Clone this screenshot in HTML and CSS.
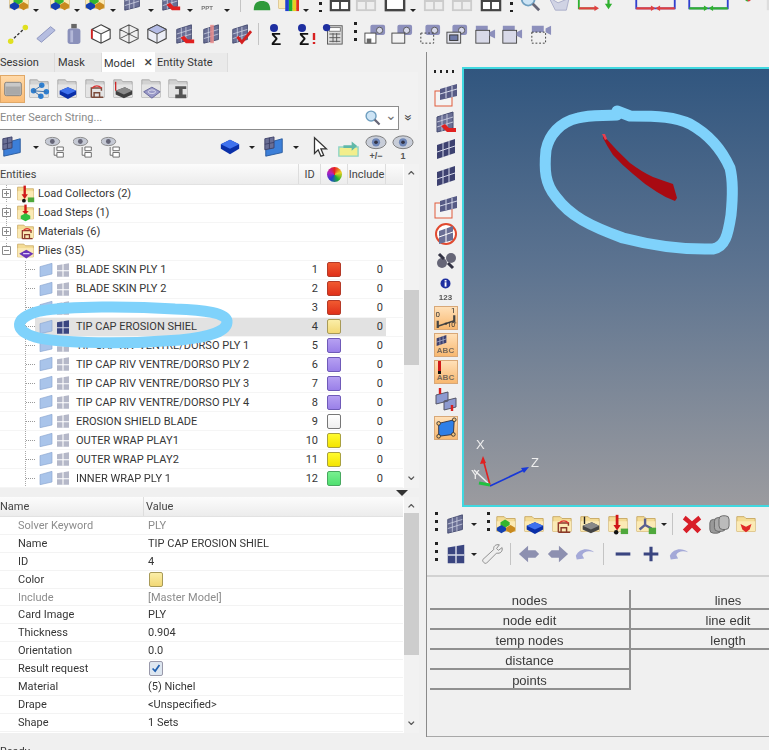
FILE: index.html
```html
<!DOCTYPE html>
<html lang="en">
<head>
<meta charset="utf-8">
<title>HyperMesh Model Browser</title>
<link rel="stylesheet" href="styles.css">
</head>
<body>
<svg class="sprite" aria-hidden="true">
  <symbol id="fy" viewBox="0 0 24 24"><path d="M2 4h8l2 2h10v14H2z" fill="#f4dc95" stroke="#c8a862"/><path d="M2 9h20v11H2z" fill="#fbeab5"/></symbol>
  <symbol id="fg" viewBox="0 0 24 24"><path d="M2 2h8l2 2h10v17H2z" fill="#d2d2d2" stroke="#a5a5a5"/><path d="M2 7h20v14H2z" fill="#e4e4e4"/></symbol>
  <symbol id="rb" viewBox="0 0 24 24"><path d="M12 4l10 5v5l-10 6-10-6V9z" fill="#0a2fa8"/><path d="M12 4l10 5-10 5L2 9z" fill="#3f72ee"/></symbol>
  <symbol id="multi" viewBox="0 0 24 24"><use href="#fy"/><path d="M11 7l5 3v3l-5 3-5-3v-3z" fill="#35b52f"/><path d="M7 13l5 3v3l-5 3-5-3v-3z" fill="#1440b0"/><path d="M17 13l5 3v3l-5 3-5-3v-3z" fill="#c98a1e"/></symbol>
  <symbol id="fblue" viewBox="0 0 24 24"><use href="#fy"/><path d="M13 10l9 4v4l-9 5-9-5v-4z" fill="#0a2fa8"/><path d="M13 10l9 4-9 4-9-4z" fill="#3f72ee"/></symbol>
  <symbol id="ftp" viewBox="0 0 24 24"><use href="#fy"/><path d="M8 21V11h11v3M11 21v-5h6v5M8 21h13" fill="none" stroke="#8b3a2a" stroke-width="1.6"/><path d="M9 11c3-3 7-3 10 0" fill="none" stroke="#d33" stroke-width="1.5"/></symbol>
  <symbol id="fslab" viewBox="0 0 24 24"><use href="#fy"/><path d="M14 10l8 4v4l-9 4-9-4v-4z" fill="#444"/><path d="M14 10l8 4-9 4-9-4z" fill="#888"/><path d="M6 4v8" stroke="#222" stroke-width="1.5"/></symbol>
  <symbol id="fload" viewBox="0 0 24 24"><use href="#fy"/><path d="M11 2v13" stroke="#d01818" stroke-width="3"/><path d="M7 13h8l-4 6z" fill="#d01818"/><circle cx="10" cy="21" r="2.4" fill="#111"/><path d="M15 17h8v6h-8z" fill="#4fa83c"/></symbol>
  <symbol id="fstep" viewBox="0 0 24 24"><use href="#fy"/><path d="M12 2v10" stroke="#d01818" stroke-width="3"/><path d="M8 10h8l-4 5z" fill="#d01818"/><path d="M12 13l6 3v4l-6 3-6-3v-4z" fill="#2fc040"/></symbol>
  <symbol id="faxis" viewBox="0 0 24 24"><use href="#fy"/><path d="M11 13V6M11 13l-6 5M11 13l7 4" fill="none" stroke="#5a5f90" stroke-width="2.6"/><path d="M15 16h8v7h-8z" fill="#4fa83c"/></symbol>
  <symbol id="fply" viewBox="0 0 24 24"><use href="#fy"/><path d="M13 11l9 5-9 6-9-6z" fill="#6a35b8"/><path d="M9 16h8" stroke="#e8d8ff" stroke-width="1.5"/></symbol>
  <symbol id="gfold" viewBox="0 0 24 24"><rect x="2" y="4" width="20" height="16" rx="2" fill="#c8c8c8" stroke="#777"/><rect x="3" y="9" width="18" height="10" fill="#a9a9a9"/></symbol>
  <symbol id="gnet" viewBox="0 0 24 24"><use href="#fg"/><circle cx="6" cy="14" r="3" fill="#2f7fd0"/><circle cx="15" cy="8" r="3" fill="#2f7fd0"/><circle cx="20" cy="15" r="3" fill="#2f7fd0"/><circle cx="14" cy="20" r="3" fill="#2f7fd0"/><path d="M6 14L15 8M6 14l14 1M6 14l8 6" stroke="#3a6ea8"/></symbol>
  <symbol id="gblue" viewBox="0 0 24 24"><use href="#fg"/><path d="M13 10l9 4v4l-9 5-9-5v-4z" fill="#0a2fa8"/><path d="M13 10l9 4-9 4-9-4z" fill="#3f72ee"/></symbol>
  <symbol id="gtp" viewBox="0 0 24 24"><use href="#fg"/><path d="M8 21V11h11v3M11 21v-5h6v5M8 21h13" fill="none" stroke="#7a4a3a" stroke-width="1.6"/><path d="M9 11c3-3 7-3 10 0" fill="none" stroke="#d33" stroke-width="1.5"/></symbol>
  <symbol id="gslab" viewBox="0 0 24 24"><use href="#fg"/><path d="M14 10l8 4v4l-9 4-9-4v-4z" fill="#3e3e3e"/><path d="M14 10l8 4-9 4-9-4z" fill="#8a8a8a"/><path d="M4 4v10" stroke="#c22" stroke-width="1.4"/></symbol>
  <symbol id="gply" viewBox="0 0 24 24"><use href="#fg"/><path d="M13 10l9 5-9 7-9-7z" fill="#9a9ac8" stroke="#66669a"/><ellipse cx="13" cy="15" rx="4" ry="2" fill="none" stroke="#dde"/></symbol>
  <symbol id="gbeam" viewBox="0 0 24 24"><use href="#fg"/><path d="M9 9h12v3h-4v6h4v4H9v-4h4v-6H9z" fill="#555"/></symbol>
  <symbol id="ply" viewBox="0 0 24 24"><path d="M3 8l18-5v15L3 22z" fill="#3c7fd8" stroke="#2a5a9c"/><path d="M2 3l10-2v12L2 15zM2 9l10-2M7 2v12" fill="#6a6f95" stroke="#3d4168"/></symbol>
  <symbol id="plyp" viewBox="0 0 24 24"><path d="M3 7l18-5v16L3 22z" fill="#a9c4ea" stroke="#8ba6d0"/></symbol>
  <symbol id="gridg" viewBox="0 0 24 24"><path d="M3 5l18-3v20H3z" fill="#b5b8c8"/><path d="M3 13h18M12 3v19" stroke="#fff" stroke-width="1.6"/></symbol>
  <symbol id="gridd" viewBox="0 0 24 24"><path d="M3 5l18-3v20H3z" fill="#3a4580"/><path d="M3 13h18M12 3v19" stroke="#d8dbe8" stroke-width="1.6"/></symbol>
  <symbol id="eyet" viewBox="0 0 24 24"><ellipse cx="8" cy="6" rx="8" ry="4.5" fill="#c5c9d4" stroke="#888"/><circle cx="8" cy="6" r="2.6" fill="#667"/><path d="M13 12h7v4h-7zM13 18h7v5h-7zM10 12v9h3" fill="#fff" stroke="#666"/></symbol>
  <symbol id="eyeb" viewBox="0 0 24 24"><ellipse cx="12" cy="9" rx="11" ry="7" fill="#c8cdd8" stroke="#777"/><circle cx="12" cy="9" r="4.5" fill="#6f87b8"/><circle cx="12" cy="9" r="2" fill="#334"/></symbol>
  <symbol id="cursor" viewBox="0 0 24 24"><path d="M6 2v17l4-4 3 7 3-1-3-7h6z" fill="#fff" stroke="#333" stroke-width="1.4"/></symbol>
  <symbol id="arrbox" viewBox="0 0 24 24"><path d="M2 12h21v10H2z" fill="#f2ee8c" stroke="#8fd4c8" stroke-width="1.5"/><path d="M7 10h9V6l6 5-6 5v-3H7z" fill="#60b8a8"/></symbol>
  <symbol id="lens" viewBox="0 0 24 24"><circle cx="10" cy="10" r="7" fill="#cde4f5" stroke="#6f9fc0" stroke-width="2"/><path d="M15 15l7 7" stroke="#667" stroke-width="3"/></symbol>
  <symbol id="ydots" viewBox="0 0 24 24"><path d="M4 20L20 5" stroke="#333" stroke-width="1.5" stroke-dasharray="3 2"/><circle cx="4" cy="20" r="3" fill="#e0e020"/><circle cx="20" cy="5" r="3" fill="#e0e020"/></symbol>
  <symbol id="pill" viewBox="0 0 24 24"><path d="M2 17L17 4l5 4L7 21z" fill="#b5bde0" stroke="#8a92bc"/></symbol>
  <symbol id="mass" viewBox="0 0 24 24"><rect x="9" y="1" width="6" height="5" fill="#666"/><rect x="5" y="6" width="14" height="17" rx="3" fill="#8a90ba"/><rect x="8" y="8" width="3" height="13" fill="#b3b8d8"/></symbol>
  <symbol id="cube" viewBox="0 0 24 24"><path d="M12 2l10 5v10l-10 5-10-5V7zM2 7l10 5 10-5M12 12v10" fill="#fff" stroke="#444" stroke-width="1.2"/></symbol>
  <symbol id="cuber" viewBox="0 0 24 24"><use href="#cube"/><path d="M2 7v10" stroke="#d42020" stroke-width="2"/></symbol>
  <symbol id="cubew" viewBox="0 0 24 24"><path d="M12 2l10 5v10l-10 5-10-5V7zM2 7l20 10M22 7L2 17M12 2v20" fill="none" stroke="#555" stroke-width="1.1"/></symbol>
  <symbol id="cubeb" viewBox="0 0 24 24"><path d="M12 2l10 5v10l-10 5-10-5V7z" fill="#eceef6" stroke="#444" stroke-width="1.2"/><path d="M12 2l10 5-10 5L2 7z" fill="#b4bce6" stroke="#444"/><path d="M12 12v10" stroke="#444"/></symbol>
  <symbol id="mesh" viewBox="0 0 24 24"><path d="M3 7l16-5v16L3 22z" fill="#6a6f95" stroke="#444a70"/><path d="M3 12l16-5M3 17l16-5M8 5v16M13 4v16" stroke="#d5d8e8" stroke-width=".8"/></symbol>
  <symbol id="meshr" viewBox="0 0 24 24"><use href="#mesh"/><path d="M11 14l4 4h7v4H13l-6-6z" fill="#e02020"/></symbol>
  <symbol id="meshc" viewBox="0 0 24 24"><use href="#mesh"/><path d="M10 2h4v20h-4z" fill="#e88a88" opacity=".85"/></symbol>
  <symbol id="meshk" viewBox="0 0 24 24"><use href="#mesh"/><path d="M8 15l5 6L23 9" fill="none" stroke="#d42020" stroke-width="3"/></symbol>
  <symbol id="info" viewBox="0 0 24 24"><circle cx="12" cy="12" r="8" fill="#1e2fa0"/><rect x="10.6" y="10" width="3" height="7" fill="#fff"/><rect x="10.6" y="6.5" width="3" height="2.4" fill="#fff"/></symbol>
  <symbol id="calc" viewBox="0 0 24 24"><rect x="6" y="3" width="16" height="20" fill="#ddd" stroke="#555"/><rect x="8" y="5" width="12" height="4" fill="#fff" stroke="#777"/><path d="M8 12h12M8 16h12M8 20h12M12 11v10M16 11v10" stroke="#555"/><circle cx="5" cy="5" r="4" fill="#1e2fa0"/></symbol>
  <symbol id="camf" viewBox="0 0 24 24"><rect x="7" y="2" width="16" height="11" rx="2" fill="#8d90bc"/><circle cx="17" cy="8" r="3.4" fill="#d7d9ea" stroke="#555"/><rect x="1" y="11" width="12" height="11" fill="#fff" stroke="#444"/><rect x="3" y="17" width="5" height="5" fill="#666"/></symbol>
  <symbol id="camw" viewBox="0 0 24 24"><rect x="7" y="2" width="16" height="11" rx="2" fill="#8d90bc"/><circle cx="17" cy="8" r="3.4" fill="#d7d9ea" stroke="#555"/><rect x="1" y="11" width="14" height="11" fill="#f2f2f2" stroke="#444"/></symbol>
  <symbol id="camd" viewBox="0 0 24 24"><rect x="7" y="2" width="16" height="11" rx="2" fill="#8d90bc"/><circle cx="17" cy="8" r="3.4" fill="#d7d9ea" stroke="#555"/><rect x="2" y="11" width="14" height="11" fill="none" stroke="#333" stroke-dasharray="2 2"/></symbol>
  <symbol id="camm" viewBox="0 0 24 24"><rect x="7" y="2" width="16" height="11" rx="2" fill="#8d90bc"/><circle cx="17" cy="8" r="3.4" fill="#d7d9ea" stroke="#555"/><rect x="1" y="10" width="15" height="12" fill="#dfe0ea" stroke="#444"/><rect x="4" y="13" width="9" height="6" fill="#6f7aa8" stroke="#333"/></symbol>
  <symbol id="vid" viewBox="0 0 24 24"><path d="M2 3h13v5H2z" fill="#8d90bc"/><rect x="2" y="8" width="15" height="14" fill="#d8d9e8" stroke="#444"/><path d="M17 10l6-3v10l-6-3z" fill="#8d90bc"/></symbol>
  <symbol id="vidd" viewBox="0 0 24 24"><path d="M2 3h13v7H2z" fill="#8d90bc"/><rect x="2" y="10" width="15" height="12" fill="none" stroke="#333" stroke-dasharray="2 2"/><path d="M17 6l6-3v10l-6-3z" fill="#8d90bc"/></symbol>
  <symbol id="person" viewBox="0 0 24 24"><circle cx="12" cy="6" r="5" fill="#e8b080"/><path d="M3 22c0-8 4-10 9-10s9 2 9 10z" fill="#2f9a3a"/></symbol>
  <symbol id="bars" viewBox="0 0 24 24"><use href="#fy"/><path d="M9 8h4v15H9z" fill="#2040d0"/><path d="M13 5h4v18h-4z" fill="#20b030"/><path d="M17 3h4v20h-4z" fill="#e8d020"/><path d="M21 7h3v16h-3z" fill="#e03020"/></symbol>
  <symbol id="win1" viewBox="0 0 24 24"><rect x="2" y="2" width="20" height="20" fill="#fff" stroke="#444" stroke-width="2.4"/><path d="M2 12h20M12 12v10" stroke="#444" stroke-width="2"/></symbol>
  <symbol id="win2" viewBox="0 0 24 24"><rect x="2" y="2" width="20" height="20" fill="#eee" stroke="#ccc" stroke-width="2"/><path d="M2 12h20M12 2v20" stroke="#ccc" stroke-width="2"/></symbol>
  <symbol id="win3" viewBox="0 0 24 24"><rect x="2" y="2" width="20" height="20" fill="#fff" stroke="#444" stroke-width="2.6"/></symbol>
  <symbol id="diamond" viewBox="0 0 24 24"><path d="M1 8l10 6 12-5-3 13H8z" fill="#d0d3e4" stroke="#a8acc8"/></symbol>
  <symbol id="axrg" viewBox="0 0 24 24"><path d="M2 0v20h20" fill="none" stroke="#30b030" stroke-width="2"/><path d="M2 20h18" stroke="#e04040" stroke-width="2.4"/><path d="M19 17l5 3-5 3z" fill="#e04040"/></symbol>
  <symbol id="axy" viewBox="0 0 24 24"><path d="M6 0v18" stroke="#30b030" stroke-width="2.4"/><path d="M2 15l4 6 4-6z" fill="#30b030"/></symbol>
  <symbol id="axbr" viewBox="0 0 48 24"><path d="M3 0v20h42V0" fill="none" stroke="#3040d0" stroke-width="2"/><path d="M3 20h18M45 20H27" stroke="#e04040" stroke-width="2.4"/><path d="M19 17l5 3-5 3zM29 17l-5 3 5 3z" fill="#e04040"/></symbol>
  <symbol id="axbg" viewBox="0 0 48 24"><path d="M3 0v20h42V0" fill="none" stroke="#3040d0" stroke-width="2"/><path d="M3 20h18M45 20H27" stroke="#30b030" stroke-width="2.4"/><path d="M19 17l5 3-5 3zM29 17l-5 3 5 3z" fill="#30b030"/></symbol>
  <symbol id="tri" viewBox="0 0 24 24"><path d="M12 12L12 0" stroke="#3040d0" stroke-width="2.4"/><path d="M12 12L2 4" stroke="#30b030" stroke-width="2.4"/><path d="M12 12l10-8" stroke="#e04040" stroke-width="2.4"/></symbol>
  <symbol id="orgx" viewBox="0 0 24 24"><rect x="2" y="2" width="20" height="20" fill="#ddd"/></symbol>
  <symbol id="x" viewBox="0 0 24 24"><path d="M5 3l7 6 7-6 3 4-6 5 6 6-4 4-6-6-6 6-4-4 6-6-6-5z" fill="#d81e28"/></symbol>
  <symbol id="sheets" viewBox="0 0 24 24"><rect x="2" y="7" width="12" height="15" rx="4" fill="#999" stroke="#666"/><rect x="7" y="5" width="12" height="15" rx="4" fill="#aaa" stroke="#666"/><rect x="12" y="3" width="11" height="15" rx="4" fill="#bbb" stroke="#666"/></symbol>
  <symbol id="fred" viewBox="0 0 24 24"><use href="#fy"/><path d="M6 12l6 3 6-3-2 6-4 3-4-3z" fill="#e02828"/></symbol>
  <symbol id="wrench" viewBox="0 0 24 24"><path d="M2 18L14 7c-1-3 2-6 6-5l-3 4 2 2 4-3c1 4-2 7-6 6L6 22c-2 1-5-2-4-4z" fill="#eee" stroke="#888"/></symbol>
  <symbol id="left" viewBox="0 0 24 24"><path d="M1 12L11 3v5h8l4 4-4 4h-8v5z" fill="#8d90b0"/></symbol>
  <symbol id="right" viewBox="0 0 24 24"><path d="M23 12L13 3v5H5l-4 4 4 4h8v5z" fill="#8d90b0"/></symbol>
  <symbol id="undo" viewBox="0 0 24 24"><path d="M2 14c4-8 13-9 20-4-6-2-11-1-13 3l2 4-8 1z" fill="#a4a9d8"/></symbol>
  <symbol id="plus" viewBox="0 0 24 24"><path d="M4 12h16M12 4v16" stroke="#3a4580" stroke-width="3.4"/></symbol>
  <symbol id="minus" viewBox="0 0 24 24"><path d="M4 12h16" stroke="#3a4580" stroke-width="3.4"/></symbol>
  <symbol id="vmesh" viewBox="0 0 24 24"><rect x="1" y="8" width="17" height="15" fill="#f4f4f4" stroke="#e05a3a"/><path d="M6 6l17-5v12L6 17z" fill="#565a85"/><path d="M6 11l17-5M12 4v11M18 3v11" stroke="#d5d8e8"/></symbol>
  <symbol id="vmeshb" viewBox="0 0 24 24"><path d="M3 8l18-6v14L3 22z" fill="#3d4170"/><path d="M3 15l18-6M9 6v14M15 4v14" stroke="#d5d8e8"/></symbol>
  <symbol id="vcirc" viewBox="0 0 24 24"><circle cx="12" cy="12" r="10" fill="#fff" stroke="#e04a30" stroke-width="2"/><path d="M5 9l14-5v14L5 22z" fill="#6a6f95"/><path d="M5 15l14-5M12 6v14" stroke="#fff"/></symbol>
  <symbol id="binoc" viewBox="0 0 24 24"><circle cx="8" cy="14" r="5" fill="#667"/><circle cx="17" cy="9" r="5" fill="#667"/><path d="M5 5l5 5M14 14l5 5" stroke="#334" stroke-width="3"/></symbol>
  <symbol id="scale" viewBox="0 0 24 24"><path d="M3 21l18-6" stroke="#444" stroke-width="1.6"/><path d="M3 15v8M21 9v8" stroke="#444" stroke-width="2.4"/></symbol>
  <symbol id="quad" viewBox="0 0 24 24"><path d="M4 7l17-4-1 16-16 2z" fill="#2f7fe8" stroke="#334"/><circle cx="4" cy="7" r="2" fill="#f6c47e" stroke="#333"/><circle cx="21" cy="3" r="2" fill="#f6c47e" stroke="#333"/><circle cx="20" cy="19" r="2" fill="#f6c47e" stroke="#333"/><circle cx="4" cy="21" r="2" fill="#f6c47e" stroke="#333"/></symbol>
  <symbol id="swap" viewBox="0 0 24 24"><path d="M2 8l12-3v9L2 17zM10 14l12-3v9l-12 3z" fill="#8d9ad0" stroke="#556"/><path d="M6 1v6M18 18v6" stroke="#d82020" stroke-width="2.4"/></symbol>
</svg>

<div class="frame">
<header class="toolbars">
  <div class="tb tb-clip">
    <svg class="i m8"><use href="#multi"/></svg><i class="c m3"></i>
    <svg class="i m10"><use href="#multi"/></svg><i class="c m3"></i>
    <svg class="i m4"><use href="#multi"/></svg><i class="c m4"></i>
    <svg class="i m6"><use href="#mesh"/></svg><i class="c m4"></i>
    <svg class="i m6"><use href="#meshr"/></svg><i class="c m5"></i>
    <svg class="i m4" viewBox="0 0 22 22"><text x="10" y="20" class="ppt">PPT</text></svg><i class="c m5"></i>
    <i class="sep sep-t m10"></i>
    <svg class="i m10"><use href="#person"/></svg>
    <svg class="i m4"><use href="#bars"/></svg><i class="c m4"></i>
    <i class="vd vd-short m10"></i>
    <svg class="i m7"><use href="#win1"/></svg>
    <svg class="i m4"><use href="#win2"/></svg>
    <svg class="i m7"><use href="#win3"/></svg><i class="c m4"></i>
    <svg class="i m7"><use href="#win2"/></svg>
    <svg class="i m6"><use href="#win2"/></svg>
    <svg class="i m7"><use href="#win1"/></svg>
    <i class="vd vd-short m8"></i>
    <svg class="i m6"><use href="#lens"/></svg>
    <svg class="i m7"><use href="#diamond"/></svg>
    <svg class="i m7"><use href="#axrg"/></svg>
    <svg class="i m4"><use href="#axy"/></svg>
    <svg class="i-w m8"><use href="#axbr"/></svg>
    <svg class="i-w m8"><use href="#axbg"/></svg>
    <svg class="i m6"><use href="#tri"/></svg>
    <svg class="i m6"><use href="#orgx"/></svg>
  </div>
  <div class="tb tb-second">
    <svg class="i m7"><use href="#ydots"/></svg>
    <svg class="i m6"><use href="#pill"/></svg>
    <svg class="i m6"><use href="#mass"/></svg>
    <svg class="i m5"><use href="#cuber"/></svg>
    <svg class="i m6"><use href="#cubew"/></svg>
    <svg class="i m6"><use href="#cubeb"/></svg>
    <svg class="i m6"><use href="#meshr"/></svg>
    <svg class="i m5"><use href="#meshc"/></svg>
    <svg class="i m7"><use href="#meshk"/></svg>
    <i class="sep m6"></i>
    <svg class="i m6" viewBox="0 0 22 22"><circle cx="9" cy="5" r="4" class="dot-info"/><text x="11" y="22" class="sig">Σ</text></svg>
    <svg class="i m8" viewBox="0 0 22 22"><circle cx="7" cy="5" r="4" class="dot-info"/><text x="9" y="22" class="sig">Σ</text><path d="M19 10v7M19 19v2" class="bang"/></svg>
    <svg class="i m5"><use href="#calc"/></svg>
    <i class="vd m10"></i>
    <svg class="i m7"><use href="#camf"/></svg>
    <svg class="i m5"><use href="#camw"/></svg>
    <svg class="i m6"><use href="#camd"/></svg>
    <svg class="i m5"><use href="#camm"/></svg>
    <svg class="i m6"><use href="#vid"/></svg>
    <svg class="i m5"><use href="#vid"/></svg>
    <svg class="i m7"><use href="#vidd"/></svg>
  </div>
</header>

<div class="main">
  <section class="panel">
    <nav class="tabs">
      <span class="tab tab-session">Session</span>
      <span class="tab tab-mask">Mask</span>
      <span class="tab tab-model">Model <b class="close">×</b></span>
      <span class="tab tab-entity">Entity State</span>
    </nav>
    <div class="browser-icons">
      <span class="hot"><svg class="i"><use href="#gfold"/></svg></span>
      <svg class="i m3"><use href="#gnet"/></svg>
      <svg class="i m6"><use href="#gblue"/></svg>
      <svg class="i m6"><use href="#gtp"/></svg>
      <svg class="i m6"><use href="#gslab"/></svg>
      <svg class="i m6"><use href="#gply"/></svg>
      <svg class="i m5"><use href="#gbeam"/></svg>
    </div>
    <div class="search-row">
      <div class="search">
        <span class="placeholder">Enter Search String...</span>
        <svg class="lens"><use href="#lens"/></svg>
        <span class="vee">⌄</span>
      </div>
      <span class="more">»</span>
    </div>
    <div class="filter-row">
      <svg class="i"><use href="#ply"/></svg><i class="c m10"></i>
      <svg class="i m6"><use href="#eyet"/></svg>
      <svg class="i m6"><use href="#eyet"/></svg>
      <svg class="i m6"><use href="#eyet"/></svg>
      <svg class="i m-auto"><use href="#rb"/></svg><i class="c m8"></i>
      <svg class="i m8"><use href="#ply"/></svg><i class="c m8"></i>
      <svg class="i m10"><use href="#cursor"/></svg>
      <svg class="i m6"><use href="#arrbox"/></svg>
      <span class="eye-wrap m6"><svg class="i"><use href="#eyeb"/></svg><em>+/−</em></span>
      <span class="eye-wrap m5"><svg class="i"><use href="#eyeb"/></svg><em>1</em></span>
    </div>

    <div class="grid-wrap entities">
      <div class="grid-main">
        <div class="thead ent-grid">
          <span class="th">Entities</span>
          <span class="th th-id">ID</span>
          <span class="th th-color"><i class="wheel"></i></span>
          <span class="th th-inc">Include</span>
        </div>
        <div class="tree">
          <div class="row root"><svg class="exp"><path d="M.5.5h8v8h-8zM2 4.5h5M4.5 2v5"/></svg><svg class="ti"><use href="#fload"/></svg><span>Load Collectors (2)</span></div>
          <div class="row root"><svg class="exp"><path d="M.5.5h8v8h-8zM2 4.5h5M4.5 2v5"/></svg><svg class="ti"><use href="#fstep"/></svg><span>Load Steps (1)</span></div>
          <div class="row root"><svg class="exp"><path d="M.5.5h8v8h-8zM2 4.5h5M4.5 2v5"/></svg><svg class="ti"><use href="#ftp"/></svg><span>Materials (6)</span></div>
          <div class="row root"><svg class="exp"><path d="M.5.5h8v8h-8zM2 4.5h5"/></svg><svg class="ti"><use href="#fply"/></svg><span>Plies (35)</span></div>
          <div class="kids">
            <div class="row ent-grid"><span class="pn"><svg class="pi"><use href="#plyp"/></svg><svg class="pi"><use href="#gridg"/></svg>BLADE SKIN PLY 1</span><span class="id">1</span><i class="sw sw-red"></i><span class="inc">0</span></div>
            <div class="row ent-grid"><span class="pn"><svg class="pi"><use href="#plyp"/></svg><svg class="pi"><use href="#gridg"/></svg>BLADE SKIN PLY 2</span><span class="id">2</span><i class="sw sw-red"></i><span class="inc">0</span></div>
            <div class="row ent-grid"><span class="pn"><svg class="pi"><use href="#plyp"/></svg><svg class="pi"><use href="#gridg"/></svg>BLADE SKIN PLY 3</span><span class="id">3</span><i class="sw sw-red"></i><span class="inc">0</span></div>
            <div class="row ent-grid selected"><span class="pn"><svg class="pi"><use href="#plyp"/></svg><svg class="pi"><use href="#gridd"/></svg>TIP CAP EROSION SHIEL</span><span class="id">4</span><i class="sw sw-cream"></i><span class="inc">0</span></div>
            <div class="row ent-grid"><span class="pn"><svg class="pi"><use href="#plyp"/></svg><svg class="pi"><use href="#gridg"/></svg>TIP CAP RIV VENTRE/DORSO PLY 1</span><span class="id">5</span><i class="sw sw-purple"></i><span class="inc">0</span></div>
            <div class="row ent-grid"><span class="pn"><svg class="pi"><use href="#plyp"/></svg><svg class="pi"><use href="#gridg"/></svg>TIP CAP RIV VENTRE/DORSO PLY 2</span><span class="id">6</span><i class="sw sw-purple"></i><span class="inc">0</span></div>
            <div class="row ent-grid"><span class="pn"><svg class="pi"><use href="#plyp"/></svg><svg class="pi"><use href="#gridg"/></svg>TIP CAP RIV VENTRE/DORSO PLY 3</span><span class="id">7</span><i class="sw sw-purple"></i><span class="inc">0</span></div>
            <div class="row ent-grid"><span class="pn"><svg class="pi"><use href="#plyp"/></svg><svg class="pi"><use href="#gridg"/></svg>TIP CAP RIV VENTRE/DORSO PLY 4</span><span class="id">8</span><i class="sw sw-purple"></i><span class="inc">0</span></div>
            <div class="row ent-grid"><span class="pn"><svg class="pi"><use href="#plyp"/></svg><svg class="pi"><use href="#gridg"/></svg>EROSION SHIELD BLADE</span><span class="id">9</span><i class="sw sw-white"></i><span class="inc">0</span></div>
            <div class="row ent-grid"><span class="pn"><svg class="pi"><use href="#plyp"/></svg><svg class="pi"><use href="#gridg"/></svg>OUTER WRAP PLAY1</span><span class="id">10</span><i class="sw sw-yellow"></i><span class="inc">0</span></div>
            <div class="row ent-grid"><span class="pn"><svg class="pi"><use href="#plyp"/></svg><svg class="pi"><use href="#gridg"/></svg>OUTER WRAP PLAY2</span><span class="id">11</span><i class="sw sw-yellow"></i><span class="inc">0</span></div>
            <div class="row ent-grid"><span class="pn"><svg class="pi"><use href="#plyp"/></svg><svg class="pi"><use href="#gridg"/></svg>INNER WRAP PLY 1</span><span class="id">12</span><i class="sw sw-green"></i><span class="inc">0</span></div>
          </div>
        </div>
      </div>
      <div class="vscroll vs-tree"><span class="arr">⌃</span><span class="thumb"></span><span class="arr arr-d">⌄</span></div>
    </div>

    <div class="splitter"><i class="down"></i></div>

    <div class="grid-wrap props">
      <div class="grid-main">
        <div class="thead prop-grid prop-head"><span class="th">Name</span><span class="th th-val">Value</span></div>
        <div class="prop-grid pr dim"><span>Solver Keyword</span><span>PLY</span></div>
        <div class="prop-grid pr"><span>Name</span><span>TIP CAP EROSION SHIEL</span></div>
        <div class="prop-grid pr"><span>ID</span><span>4</span></div>
        <div class="prop-grid pr"><span>Color</span><span><i class="sw sw-cream"></i></span></div>
        <div class="prop-grid pr dim"><span>Include</span><span>[Master Model]</span></div>
        <div class="prop-grid pr"><span>Card Image</span><span>PLY</span></div>
        <div class="prop-grid pr"><span>Thickness</span><span>0.904</span></div>
        <div class="prop-grid pr"><span>Orientation</span><span>0.0</span></div>
        <div class="prop-grid pr"><span>Result request</span><span><svg class="chk" viewBox="0 0 14 14"><path d="M3 7l3 3 5-7"/></svg></span></div>
        <div class="prop-grid pr"><span>Material</span><span>(5) Nichel</span></div>
        <div class="prop-grid pr"><span>Drape</span><span>&lt;Unspecified&gt;</span></div>
        <div class="prop-grid pr"><span>Shape</span><span>1 Sets</span></div>
      </div>
      <div class="vscroll vs-props"><span class="arr">⌃</span><span class="thumb"></span><span class="arr arr-d">⌄</span></div>
    </div>
  </section>

  <section class="right">
    <div class="view-row">
      <div class="vtools">
        <i class="hdots"></i>
        <svg class="vi"><use href="#vmesh"/></svg>
        <svg class="vi"><use href="#meshr"/></svg>
        <svg class="vi"><use href="#vmeshb"/></svg>
        <svg class="vi"><use href="#vmeshb"/></svg>
        <svg class="vi gap4"><use href="#vmesh"/></svg>
        <svg class="vi"><use href="#vcirc"/></svg>
        <svg class="vi"><use href="#binoc"/></svg>
        <span class="vi stack"><svg class="mini"><use href="#info"/></svg><small>123</small></span>
        <span class="vi org gap3"><svg class="full"><use href="#scale"/></svg><small class="n0">0</small><small class="n1">1</small><small class="n10">*10'</small></span>
        <span class="vi org"><svg class="mini-l"><use href="#vmeshb"/></svg><small class="abc">ABC</small></span>
        <span class="vi org"><i class="rbar"></i><small class="abc">ABC</small></span>
        <svg class="vi"><use href="#swap"/></svg>
        <span class="vi org gap2"><svg class="full"><use href="#quad"/></svg></span>
      </div>
      <div class="viewport">
        <svg class="scene" viewBox="464 69 307 440">
          <path class="blade" d="M603 135Q616 150 630 163Q642 172 653 177Q664 181 673 184L677 198L675 201Q666 198 657 192Q644 184 633 174Q622 165 613 155Q607 146 603 138Z"/>
          <path class="blade-tip" d="M602 134l3 0 2 5-2 1z"/>
          <path class="ax-w" d="M490 485L474 470"/>
          <path class="ax-r" d="M490 485L483 459"/>
          <path class="ax-rh" d="M483 456l-3 8 6-1z"/>
          <path class="ax-b" d="M490 486L526 469"/>
          <path class="ax-bh" d="M529 467l-8 1 3 5z"/>
          <path class="ax-g" d="M490 485L479 483"/>
          <text x="476" y="449" class="ax-t">X</text>
          <text x="471" y="479" class="ax-t">Y</text>
          <text x="531" y="467" class="ax-t">Z</text>
        </svg>
      </div>
    </div>

    <div class="tb2">
      <i class="vd"></i>
      <svg class="i m7"><use href="#mesh"/></svg><i class="c m4"></i>
      <i class="vd m10"></i>
      <svg class="i m5"><use href="#multi"/></svg>
      <svg class="i m6"><use href="#fblue"/></svg>
      <svg class="i m6"><use href="#ftp"/></svg>
      <svg class="i m6"><use href="#fslab"/></svg>
      <svg class="i m6"><use href="#fload"/></svg>
      <svg class="i m6"><use href="#faxis"/></svg><i class="c m4"></i>
      <i class="sep m5"></i>
      <svg class="i m8"><use href="#x"/></svg>
      <svg class="i m5"><use href="#sheets"/></svg>
      <svg class="i m5"><use href="#fred"/></svg>
    </div>
    <div class="tb2">
      <i class="vd"></i>
      <svg class="i m7"><use href="#gridd"/></svg><i class="c m4"></i>
      <svg class="i m4"><use href="#wrench"/></svg>
      <i class="sep m7"></i>
      <svg class="i m7"><use href="#left"/></svg>
      <svg class="i m7"><use href="#right"/></svg>
      <svg class="i m5"><use href="#undo"/></svg>
      <i class="sep m7"></i>
      <svg class="i m8"><use href="#minus"/></svg>
      <svg class="i m6"><use href="#plus"/></svg>
      <svg class="i m6"><use href="#undo"/></svg>
    </div>

    <div class="menu">
      <div class="menu-col">
        <span class="btn">nodes</span>
        <span class="btn">node edit</span>
        <span class="btn">temp nodes</span>
        <span class="btn">distance</span>
        <span class="btn">points</span>
      </div>
      <div class="menu-col col2">
        <span class="btn">lines</span>
        <span class="btn">line edit</span>
        <span class="btn">length</span>
      </div>
    </div>
  </section>
</div>

<footer class="status">Ready</footer>

<svg class="marks" viewBox="0 0 769 750" aria-hidden="true">
  <path d="M40 311C70 306 130 306 175 309C205 310 226 313 227 321C228 331 210 337 180 340C130 344 60 344 35 337C15 331 12 318 40 311Z"/>
  <path d="M617 115C600 116 590 115 578 118C560 122 549 135 546 150C544 170 545 184 556 197C570 216 590 226 623 238C650 245 680 250 713 249C725 247 728 235 731 215C733 195 733 180 730 168C722 150 710 135 690 124C675 117 660 116 630 116L617 111Z"/>
</svg>
</div>
</body>
</html>
```

FILE: styles.css
```css
* { box-sizing: border-box; }
html, body { margin: 0; height: 750px; overflow: hidden; }
body {
  background: #f0f0f0;
  color: #363636;
  font: 11px/1 Roboto, "Liberation Sans", Arial, sans-serif;
}
.frame {
  position: relative;
  height: 750px;
  display: flex;
  flex-direction: column;
  overflow: hidden;
  filter: blur(.4px);
}
i, em { font-style: normal; }
.sprite { position: absolute; width: 0; height: 0; }

/* icon primitives */
.i { width: 22px; height: 22px; flex: none; overflow: visible; }
.i-w { width: 45px; height: 22px; flex: none; }
.c { flex: none; width: 0; height: 0; border: 3px solid transparent; border-top: 3px solid #222; border-bottom: 0; }
.sep { flex: none; width: 1px; height: 22px; background: #c4c4c4; }
.sep-t { height: 14px; }
.vd { flex: none; width: 3px; height: 24px; background: repeating-linear-gradient(#222 0 3px, transparent 3px 8px); }
.vd-short { height: 10px; }
.m3 { margin-left: 3px; } .m4 { margin-left: 4px; } .m5 { margin-left: 5px; }
.m6 { margin-left: 6px; } .m7 { margin-left: 7px; } .m8 { margin-left: 8px; }
.m10 { margin-left: 10px; } .m-auto { margin-left: auto; }

/* top toolbars */
.toolbars { flex: none; height: 52px; overflow: hidden; }
.tb { display: flex; align-items: center; }
.tb-clip { height: 12px; align-items: flex-end; overflow: hidden; }
.tb-second { height: 22px; margin-top: 11px; }
.ppt { font: bold 6px "Liberation Sans", sans-serif; fill: #777; text-anchor: middle; }
.sig { font: bold 17px "Liberation Sans", sans-serif; fill: #111; text-anchor: middle; }
.dot-info { fill: #1e2fa0; }
.bang { stroke: #d82020; stroke-width: 2.4; fill: none; }

/* layout */
.main { flex: 1; display: flex; min-height: 0; }
.panel { flex: none; width: 427px; border-right: 1px solid #8a8a8a; padding-right: 8px; display: flex; flex-direction: column; }
.right { flex: 1; min-width: 0; display: flex; flex-direction: column; overflow: hidden; border-bottom: 1px solid #a8a8a8; }

/* tabs */
.tabs { flex: none; height: 20px; display: flex; align-items: flex-end; }
.tab { height: 19px; padding-top: 4px; background: #eaeaea; border-right: 1px solid #dcdcdc; flex: none; }
.tab-session { width: 55px; }
.tab-mask { width: 47px; padding-left: 3px; }
.tab-model { width: 53px; height: 20px; padding-left: 2px; padding-top: 5px; background: #fff; border: 0; }
.tab-entity { width: 73px; padding-left: 2px; }
.close { font-weight: normal; font-size: 15px; line-height: 10px; margin-left: 7px; color: #444; }

.browser-icons { flex: none; height: 33px; display: flex; align-items: center; background: #f2f2f2; }
.hot { width: 25px; height: 28px; background: linear-gradient(#ffd9a8, #fbbd78); border: 1px solid #e0a868; display: flex; align-items: center; justify-content: center; }
.hot .i { width: 20px; height: 20px; }

.search-row { flex: none; height: 25px; display: flex; align-items: center; background: #f2f2f2; }
.search { width: 399px; height: 24px; background: #fff; border: 1px solid #8c8c8c; border-left: 0; display: flex; align-items: center; }
.placeholder { flex: 1; color: #8a8a8a; }
.lens { width: 17px; height: 17px; }
.vee { width: 15px; margin-left: 2px; color: #777; font-size: 14px; margin-top: -6px; text-align: center; }
.more { flex: 1; text-align: center; transform: rotate(90deg); font-size: 15px; color: #444; }

.filter-row { flex: none; height: 34px; display: flex; align-items: center; padding: 0 4px 0 1px; background: #f0f0f0; }
.eye-wrap { position: relative; width: 22px; height: 26px; flex: none; }
.eye-wrap em { display: block; margin-top: -7px; text-align: center; font: bold 9px "Liberation Sans", sans-serif; color: #555; }

/* grids */
.grid-wrap { display: flex; flex: none; background: #fff; }
.grid-main { width: 403px; flex: none; overflow: hidden; }
.entities { height: 324px; }
.props { height: 236px; }
.thead { height: 21px; background: linear-gradient(#fcfcfc, #ececec); border-bottom: 1px solid #e2e2e2; }
.th { display: flex; align-items: center; height: 100%; color: #444; }
.ent-grid { display: grid; grid-template-columns: 298px 22px 27px 39px 17px; align-items: center; }
.th-id, .th-color, .th-inc { border-left: 1px solid #ddd; justify-content: center; }
.th-inc { border-right: 1px solid #ddd; }
.wheel { width: 15px; height: 15px; border-radius: 50%; background: conic-gradient(#e82020, #e8d020, #20b030, #2040d0, #b020c0, #e82020); }

.tree { height: 303px; background-image: repeating-linear-gradient(#a8a8a8 0 1px, transparent 1px 2px); background-size: 1px 66px; background-position: 6px 0; background-repeat: no-repeat; }
.row { height: 18.95px; border-bottom: 1px solid #f5f5f5; }
.root { display: flex; align-items: center; background: transparent; }
.exp { width: 9px; height: 9px; margin-left: 2px; flex: none; fill: #fff; stroke: #8a8a8a; stroke-width: 1; }
.ti { width: 19px; height: 19px; margin-left: 5px; flex: none; }
.root span { margin-left: 3px; }

.kids { background-image: repeating-linear-gradient(#a8a8a8 0 1px, transparent 1px 2px); background-size: 1px 100%; background-position: 25px 0; background-repeat: no-repeat; }
.pn { display: flex; align-items: center; padding-left: 38px; white-space: nowrap; position: relative; height: 17px; }
.pn::before { content: ""; position: absolute; left: 26px; top: 8px; width: 9px; border-top: 1px dotted #999; }
.pi { width: 16px; height: 16px; margin-right: 1px; flex: none; }
.pi + .pi { margin-right: 5px; }
.id { text-align: right; padding-right: 2px; }
.inc { text-align: right; padding-right: 3px; }
.sw { display: block; width: 14px; height: 15px; margin-left: 7px; border-radius: 2px; border: 1px solid #888; }
.sw-red { background: linear-gradient(#f05a30, #e0301a); border-color: #b43a28; }
.sw-cream { background: linear-gradient(#fbeea8, #f2d875); border-color: #a89a58; }
.sw-purple { background: linear-gradient(#b6a0f2, #9a80e8); border-color: #6f5ab8; }
.sw-white { background: linear-gradient(#fff, #eee); border-color: #777; }
.sw-yellow { background: linear-gradient(#fffb30, #f4e400); border-color: #a8a040; }
.sw-green { background: linear-gradient(#78f090, #50e070); border-color: #48a860; }
.selected { background: linear-gradient(90deg, transparent 35px, #e2e2e2 35px, #e2e2e2 386px, transparent 386px); }

/* scrollbars */
.vscroll { width: 15px; flex: none; margin-left: 1px; background: #f2f2f2; position: relative; display: block; }
.arr { position: absolute; left: 0; width: 100%; text-align: center; font-size: 15px; color: #555; top: 8px; line-height: 10px; }
.arr-d { top: auto; bottom: 8px; }
.thumb { position: absolute; left: 0; width: 100%; background: #cdcdcd; }
.vs-tree .thumb { top: 126px; height: 75px; }
.vs-props .thumb { top: 16px; height: 142px; }

.splitter { flex: none; height: 9px; background: #f0f0f0; position: relative; }
.down { position: absolute; left: 396px; top: 2px; width: 0; height: 0; border: 6px solid transparent; border-top: 6px solid #333; border-bottom: 0; }

.prop-grid { display: grid; grid-template-columns: 143px 1fr; align-items: center; }
.prop-head { height: 20px; }
.th-val { border-left: 1px solid #ddd; padding-left: 2px; }
.pr { height: 17.9px; border-bottom: 1px solid #f3f3f3; }
.pr > span:first-child { padding-left: 18px; }
.pr > span:last-child { padding-left: 5px; }
.pr .sw { margin-left: 1px; }
.dim { color: #8c8c8c; }
.chk { display: block; width: 14px; height: 15px; margin-left: 1px; border: 1px solid #99a; background: #dde6f0; border-radius: 2px; fill: none; stroke: #2060b0; stroke-width: 2; }

/* right side */
.view-row { flex: none; display: flex; padding-top: 15px; height: 455px; }
.vtools { flex: none; width: 35px; display: flex; flex-direction: column; align-items: center; gap: 3px; padding-left: 2px; }
.hdots { flex: none; display: block; width: 24px; height: 3px; margin-top: 3px; margin-bottom: 7px; background: repeating-linear-gradient(90deg, #222 0 2px, transparent 2px 6px); }
.vi { position: relative; display: block; width: 24px; height: 24px; flex: none; }
.gap4 { margin-top: 4px; } .gap3 { margin-top: 3px; } .gap2 { margin-top: 2px; }
.org { background: linear-gradient(#ffe0b8, #f8b870); border: 1px solid #d8a878; }
.full { width: 100%; height: 100%; display: block; }
.stack { text-align: center; }
.mini { display: block; width: 15px; height: 15px; margin: 0 auto; }
.stack small { display: block; font: bold 8px "Liberation Sans", sans-serif; color: #555; margin-top: 2px; }
.mini-l { display: block; width: 13px; height: 13px; }
.abc { position: absolute; left: 0; right: 0; bottom: 1px; text-align: center; font: bold 8px "Liberation Sans", sans-serif; color: #7a6a5a; }
.rbar { display: block; width: 3px; height: 13px; margin-left: 3px; background: #d01818; border-bottom: 3px solid #111; }
.n0, .n1, .n10 { position: absolute; font-size: 8px; color: #333; }
.n0 { left: 1px; top: 4px; } .n1 { right: 1px; top: 0; } .n10 { right: 0; bottom: 0; font-size: 7px; }

.viewport { flex: none; position: relative; width: 340px; height: 440px; border: 2px solid #40d8e0; border-right: 0; background: linear-gradient(#31567f, #5c7390 45%, #9b9b9f); }
.scene { position: absolute; left: 0; top: 0; width: 307px; height: 440px; overflow: visible; }
.blade { fill: #a80a12; }
.blade-tip { fill: #e84050; }
.ax-w, .ax-r, .ax-b, .ax-g { fill: none; stroke-width: 1.6; }
.ax-w { stroke: #eee; }
.ax-r { stroke: #e02020; }
.ax-rh { fill: #e02020; }
.ax-b { stroke: #1838d8; }
.ax-bh { fill: #1838d8; }
.ax-g { stroke: #20c040; stroke-width: 3; }
.ax-t { font: 13px "Liberation Sans", sans-serif; fill: #eee; }

.tb2 { flex: none; height: 30px; display: flex; align-items: center; padding: 4px 0 0 8px; white-space: nowrap; }

.menu { flex: none; display: flex; margin-top: 8px; padding: 13px 0 0 3px; border-top: 2px solid #d2d2d2; }
.menu-col { flex: none; width: 201px; display: flex; flex-direction: column; }
.col2 { width: 196px; }
.btn { height: 20px; padding-top: 3px; text-align: center; font: 13px "Liberation Sans", sans-serif; background: #f0f0f0; border-bottom: 2px solid #909090; border-right: 2px solid #909090; color: #3a3a3a; }

/* footer */
.status { flex: none; height: 13px; padding-top: 9px; line-height: 12px; overflow: hidden; }

/* hand-drawn annotations */
.marks { position: absolute; left: 0; top: 0; width: 769px; height: 750px; pointer-events: none; }
.marks path { fill: none; stroke: #7fd2fb; stroke-width: 11; stroke-linecap: round; stroke-linejoin: round; }
```
